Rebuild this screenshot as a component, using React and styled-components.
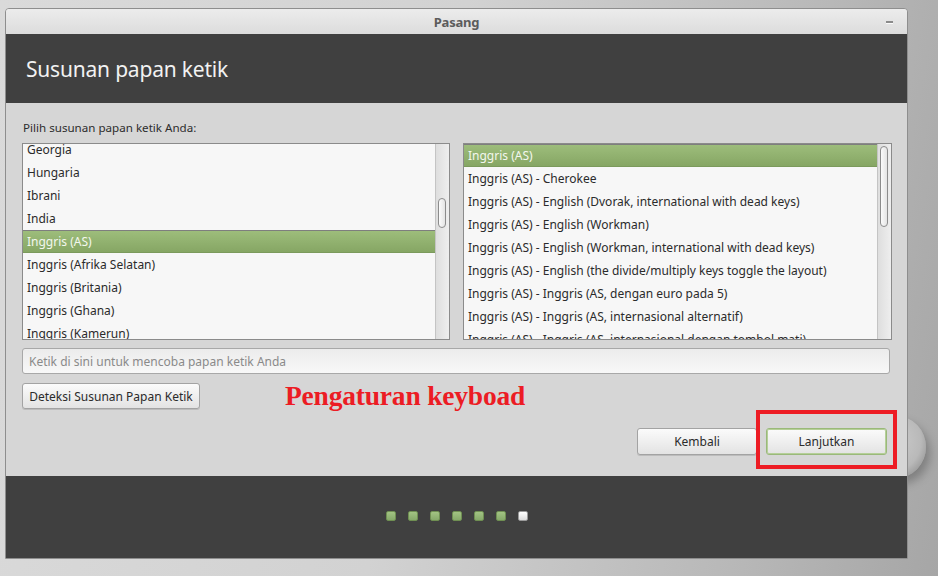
import React from "react";
import styled, { createGlobalStyle } from "styled-components";

const GlobalStyle = createGlobalStyle`
  html, body {
    margin: 0;
    padding: 0;
  }
  body {
    width: 938px;
    height: 576px;
    overflow: hidden;
    font-family: "Noto Sans", "DejaVu Sans", sans-serif;
    background: linear-gradient(100deg, #dadada 0%, #d2d2d2 45%, #b8b8b8 80%, #a6a6a6 100%);
  }
`;

const Desk = styled.div`
  position: relative;
  padding: 8px 0 0 5px;
  height: 576px;
  box-sizing: border-box;
`;

const Blob = styled.div`
  position: absolute;
  left: 866px;
  top: 416px;
  width: 60px;
  height: 62px;
  border-radius: 50%;
  background: radial-gradient(circle at 40% 40%, #cfcfcf 0%, #b9b9b9 60%, #7a7a7a 100%);
  box-shadow: 4px 6px 10px rgba(0, 0, 0, 0.25);
`;

const Window = styled.div`
  position: relative;
  width: 903px;
  height: 551px;
  box-sizing: border-box;
  border: 1px solid #8e8e8e;
  border-radius: 4px 4px 0 0;
  display: flex;
  flex-direction: column;
  background: #d6d6d6;
  overflow: hidden;
`;

const TitleBar = styled.div`
  height: 25px;
  flex: none;
  position: relative;
  display: flex;
  align-items: center;
  justify-content: center;
  background: linear-gradient(#ececec, #dcdcdc);
  font-size: 13px;
  font-weight: bold;
  color: #5c5c5c;
  letter-spacing: -0.2px;
`;

const Minimize = styled.span`
  position: absolute;
  right: 14px;
  top: 12px;
  width: 7px;
  height: 2px;
  background: #8a8a8a;
  border-bottom: 1px solid #fafafa;
`;

const Header = styled.div`
  height: 69px;
  flex: none;
  background: #404040;
  display: flex;
  align-items: center;
  padding-left: 20px;
  color: #f2f2f2;
  font-size: 21px;
  letter-spacing: -0.2px;
`;

const Body = styled.div`
  flex: 1;
  position: relative;
  padding: 16px 15px 0 16px;
  display: flex;
  flex-direction: column;
  color: #2d2d2d;
  font-size: 12px;
`;

const Label = styled.div`
  height: 17px;
  line-height: 17px;
  font-size: 11.6px;
  margin: 0 0 7px 1px;
`;

const Lists = styled.div`
  display: grid;
  grid-template-columns: 428px 429px;
  gap: 13px;
`;

const List = styled.div`
  height: 197px;
  box-sizing: border-box;
  border: 1px solid #8b8b8b;
  background: #f7f7f7;
  display: flex;
  overflow: hidden;
`;

const Rows = styled.div`
  flex: 1;
  margin-top: ${(p) => p.$offset}px;
`;

const Row = styled.div`
  height: 23px;
  box-sizing: border-box;
  padding-left: 4px;
  white-space: nowrap;
  font-size: 12px;
  color: ${(p) => (p.$selected ? "#f3f7ee" : "#2b2b2b")};
  background: ${(p) =>
    p.$selected ? "linear-gradient(#9dbd7b, #86a664)" : "transparent"};
  border-top: ${(p) => (p.$selected ? "1px solid #7e7e7e" : "none")};
  border-bottom: ${(p) => (p.$selected ? "1px solid #7b9a5c" : "none")};
  line-height: ${(p) => (p.$selected ? "21px" : "23px")};
`;

const Trough = styled.div`
  width: 13px;
  flex: none;
  border-left: 1px solid #c4c4c4;
  background: linear-gradient(to right, #dedede, #eeeeee);
  position: relative;
`;

const Thumb = styled.div`
  position: absolute;
  left: 2px;
  top: ${(p) => p.$top}px;
  width: 8px;
  height: ${(p) => p.$height}px;
  box-sizing: border-box;
  border: 1px solid #8c8c8c;
  border-radius: 5px;
  background: linear-gradient(to right, #fbfbfb, #e4e4e4);
`;

const TestInput = styled.input`
  margin-top: 8px;
  width: 868px;
  height: 26px;
  box-sizing: border-box;
  border: 1px solid #a8a8a8;
  border-radius: 3px;
  background: linear-gradient(#ececec, #f8f8f8);
  padding: 0 6px;
  font-family: inherit;
  font-size: 12px;
  color: #333;
  outline: none;
  &::placeholder {
    color: #8a8a8a;
  }
`;

const ToolRow = styled.div`
  margin-top: 9px;
  display: flex;
  align-items: center;
`;

const Button = styled.button`
  height: ${(p) => (p.$tall ? 27 : 26)}px;
  width: ${(p) => p.$w}px;
  box-sizing: border-box;
  border: 1px solid ${(p) => (p.$primary ? "#9ab97a" : "#a3a3a3")};
  box-shadow: ${(p) =>
    p.$primary ? "inset 0 0 0 1px #b5cf98" : "0 1px 0 rgba(0,0,0,0.12)"};
  border-radius: 3px;
  background: linear-gradient(#fbfbfb, #e3e3e3);
  font-family: inherit;
  font-size: 12px;
  color: #2b2b2b;
  padding: 0;
  cursor: pointer;
`;

const Annotation = styled.div`
  margin-left: 85px;
  font-family: "Liberation Serif", "DejaVu Serif", serif;
  font-weight: bold;
  font-size: 27.5px;
  line-height: 26px;
  color: #ec1c24;
  letter-spacing: -0.2px;
`;

const Actions = styled.div`
  margin-top: 19px;
  display: flex;
  justify-content: flex-end;
  gap: 9px;
  padding-right: 5px;
`;

const Highlight = styled.div`
  position: absolute;
  left: 750px;
  top: 307px;
  width: 141px;
  height: 59px;
  box-sizing: border-box;
  border: 4px solid #ed1c24;
  pointer-events: none;
`;

const Footer = styled.div`
  height: 82px;
  flex: none;
  background: #404040;
  display: flex;
  align-items: center;
  justify-content: center;
  gap: 12px;
  padding-bottom: 3px;
  box-sizing: border-box;
`;

const Dot = styled.span`
  width: 10px;
  height: 10px;
  box-sizing: border-box;
  border-radius: 2px;
  border: 1px solid ${(p) => (p.$done ? "#6f8f52" : "#9a9a9a")};
  background: ${(p) =>
    p.$done ? "linear-gradient(#a2c383, #86a96a)" : "linear-gradient(#ffffff, #dcdcdc)"};
`;

const leftItems = [
  "Georgia",
  "Hungaria",
  "Ibrani",
  "India",
  "Inggris (AS)",
  "Inggris (Afrika Selatan)",
  "Inggris (Britania)",
  "Inggris (Ghana)",
  "Inggris (Kamerun)",
];

const rightItems = [
  "Inggris (AS)",
  "Inggris (AS) - Cherokee",
  "Inggris (AS) - English (Dvorak, international with dead keys)",
  "Inggris (AS) - English (Workman)",
  "Inggris (AS) - English (Workman, international with dead keys)",
  "Inggris (AS) - English (the divide/multiply keys toggle the layout)",
  "Inggris (AS) - Inggris (AS, dengan euro pada 5)",
  "Inggris (AS) - Inggris (AS, internasional alternatif)",
  "Inggris (AS) - Inggris (AS, internasional dengan tombol mati)",
];

const App = () => {
  return (
    <>
      <GlobalStyle />
      <Desk>
        <Blob />
        <Window>
          <TitleBar>
            Pasang
            <Minimize />
          </TitleBar>
          <Header>Susunan papan ketik</Header>
          <Body>
            <Label>Pilih susunan papan ketik Anda:</Label>
            <Lists>
              <List>
                <Rows $offset={-6}>
                  {leftItems.map((item) => (
                    <Row key={item} $selected={item === "Inggris (AS)"}>
                      {item}
                    </Row>
                  ))}
                </Rows>
                <Trough>
                  <Thumb $top={54} $height={30} />
                </Trough>
              </List>
              <List>
                <Rows $offset={0}>
                  {rightItems.map((item, i) => (
                    <Row key={item} $selected={i === 0}>
                      {item}
                    </Row>
                  ))}
                </Rows>
                <Trough>
                  <Thumb $top={2} $height={81} />
                </Trough>
              </List>
            </Lists>
            <TestInput placeholder="Ketik di sini untuk mencoba papan ketik Anda" />
            <ToolRow>
              <Button $w={178}>Deteksi Susunan Papan Ketik</Button>
              <Annotation>Pengaturan keyboad</Annotation>
            </ToolRow>
            <Actions>
              <Button $tall $w={120}>Kembali</Button>
              <Button $tall $primary $w={121}>Lanjutkan</Button>
            </Actions>
            <Highlight />
          </Body>
          <Footer>
            {[0, 1, 2, 3, 4, 5].map((i) => (
              <Dot key={i} $done />
            ))}
            <Dot />
          </Footer>
        </Window>
      </Desk>
    </>
  );
};

export default App;
